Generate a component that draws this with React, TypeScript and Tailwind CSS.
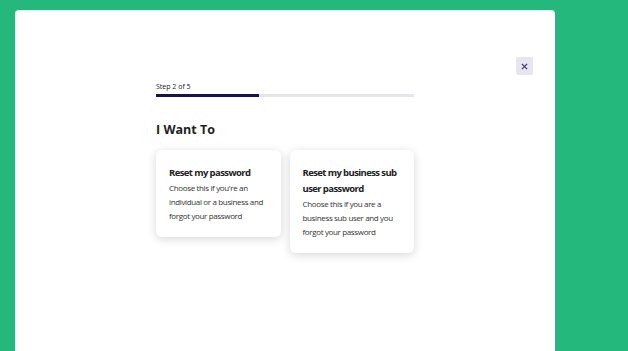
import React from "react";

const font = { fontFamily: '"Open Sans", "Noto Sans", sans-serif' };

function Card({ title, body }: { title: string[]; body: string[] }) {
  return (
    <div className="w-[125px] rounded-[6px] bg-white pl-[13px] pr-[2px] pt-[15px] pb-[14px] shadow-[0_2px_10px_rgba(0,0,0,0.16)]">
      <div className="whitespace-nowrap text-[9.5px] font-bold leading-[16px] tracking-[-0.6px] text-[#222]">
        {title.map((t, i) => (
          <div key={i}>{t}</div>
        ))}
      </div>
      <div className="whitespace-nowrap text-[8px] leading-[14px] tracking-[-0.35px] text-[#333]">
        {body.map((t, i) => (
          <div key={i}>{t}</div>
        ))}
      </div>
    </div>
  );
}

export default function App() {
  return (
    <div className="h-[351px] w-[628px] overflow-hidden bg-[#24b87d] pl-[15px] pt-[10px]" style={font}>
      <div className="relative h-[341px] w-[540px] rounded-t-[4px] bg-white">
        <button className="absolute left-[501px] top-[47px] flex h-[18px] w-[17px] items-center justify-center rounded-[2px] bg-[#e7e6ee]">
          <svg width="7" height="7" viewBox="0 0 8 8">
            <path d="M1 1L7 7M7 1L1 7" stroke="#3a2e6c" strokeWidth="1.3" />
          </svg>
        </button>
        <div className="ml-[141px] w-[258px] pt-[72px]">
          <div className="text-[7px] leading-[10px] text-[#222]">Step 2 of 5</div>
          <div className="mt-[2px] h-[3px] w-full bg-[#e6e5ec]">
            <div className="h-full w-[103px] bg-[#1b1056]" />
          </div>
          <div className="mt-[25px] text-[12.5px] font-bold leading-[16px] text-[#222]">I Want To</div>
          <div className="mt-[12px] flex items-start gap-[9px]">
            <Card
              title={["Reset my password"]}
              body={["Choose this if you're an", "individual or a business and", "forgot your password"]}
            />
            <Card
              title={["Reset my business sub", "user password"]}
              body={["Choose this if you are a", "business sub user and you", "forgot your password"]}
            />
          </div>
        </div>
      </div>
    </div>
  );
}
